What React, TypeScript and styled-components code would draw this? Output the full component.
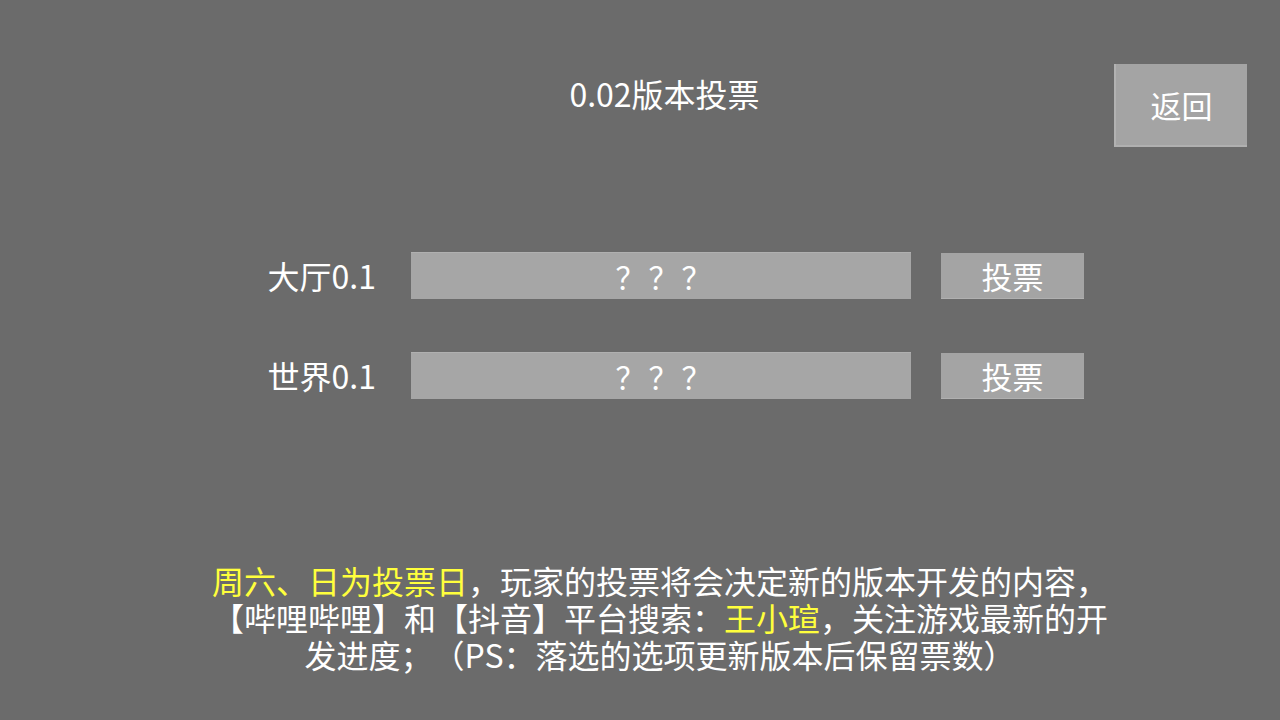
import styled, { createGlobalStyle } from "styled-components";

const GlobalStyle = createGlobalStyle`
  html, body {
    margin: 0;
    padding: 0;
    background: #6b6b6b;
  }
  body {
    font-family: "Noto Sans CJK SC", "Noto Sans", sans-serif;
    color: #ffffff;
    text-spacing-trim: space-all;
  }
`;

const Page = styled.div`
  width: 1280px;
  height: 720px;
  background: #6b6b6b;
  display: flex;
  flex-direction: column;
  padding-top: 64px;
  box-sizing: border-box;
  overflow: hidden;
`;

const Header = styled.div`
  display: flex;
  align-items: flex-start;
  padding: 0 33px 0 215px;
`;

const Title = styled.div`
  flex: 1;
  text-align: center;
  font-size: 32px;
  line-height: 40px;
  margin-top: 9px;
`;

const BackButton = styled.button`
  width: 133px;
  height: 83px;
  background: #a4a4a4;
  border: none;
  border-left: 2px solid #b2b2b2;
  border-bottom: 2px solid #b0b0b0;
  color: #ffffff;
  font-family: inherit;
  font-size: 31px;
  padding: 0;
  cursor: pointer;
`;

const Rows = styled.div`
  display: flex;
  flex-direction: column;
  gap: 53px;
  margin-top: 105px;
`;

const Row = styled.div`
  display: flex;
  align-items: center;
  padding-left: 200px;
`;

const Label = styled.div`
  width: 176px;
  text-align: right;
  font-size: 32px;
  line-height: 47px;
  margin-right: 35px;
`;

const Field = styled.div`
  width: 500px;
  height: 47px;
  background: #a6a6a6;
  border-top: 1px solid #b0b0b0;
  box-sizing: border-box;
  display: flex;
  align-items: center;
  justify-content: center;
  padding-left: 8px;
  font-size: 30px;
  letter-spacing: 3px;
  margin-right: 30px;
`;

const VoteButton = styled.button`
  width: 143px;
  height: 46px;
  background: #a4a4a4;
  border: none;
  border-bottom: 1px solid #b0b0b0;
  color: #ffffff;
  font-family: inherit;
  font-size: 31px;
  padding: 0;
  cursor: pointer;
`;

const Notice = styled.div`
  margin-top: 163px;
  padding-left: 40px;
  text-align: center;
  font-size: 32px;
  line-height: 37px;
  white-space: nowrap;
`;

const Mark = styled.span`
  color: #ffff3c;
`;

const items = ["大厅0.1", "世界0.1"];

export default function App() {
  return (
    <Page>
      <GlobalStyle />
      <Header>
        <Title>0.02版本投票</Title>
        <BackButton>返回</BackButton>
      </Header>
      <Rows>
        {items.map((name) => (
          <Row key={name}>
            <Label>{name}</Label>
            <Field>？？？</Field>
            <VoteButton>投票</VoteButton>
          </Row>
        ))}
      </Rows>
      <Notice>
        <Mark>周六、日为投票日</Mark>，玩家的投票将会决定新的版本开发的内容，
        <br />
        【哔哩哔哩】和【抖音】平台搜索：<Mark>王小瑄</Mark>，关注游戏最新的开
        <br />
        发进度；（PS：落选的选项更新版本后保留票数）
      </Notice>
    </Page>
  );
}
